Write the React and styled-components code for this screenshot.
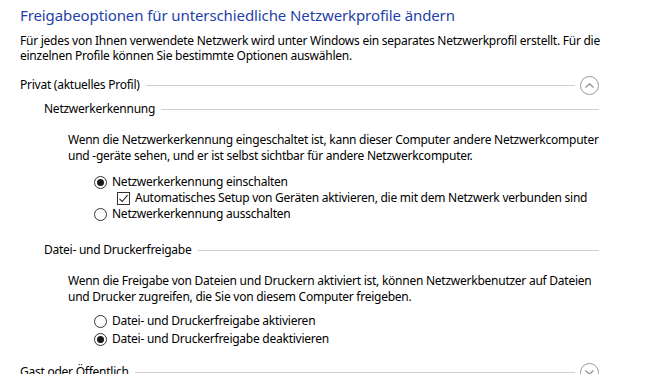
import React from 'react'
import styled, { createGlobalStyle } from 'styled-components'

const GlobalStyle = createGlobalStyle`
  html, body {
    margin: 0;
    padding: 0;
    background: #ffffff;
    overflow: hidden;
  }
  body {
    font-family: "Noto Sans", "Open Sans", sans-serif;
    font-size: 12px;
    letter-spacing: -0.25px;
    color: #000000;
  }
`

const sections = [
  {
    title: 'Netzwerkerkennung',
    text: [
      'Wenn die Netzwerkerkennung eingeschaltet ist, kann dieser Computer andere Netzwerkcomputer',
      'und -geräte sehen, und er ist selbst sichtbar für andere Netzwerkcomputer.',
    ],
    rowHeight: 16,
    options: [
      { type: 'radio', label: 'Netzwerkerkennung einschalten', checked: true },
      { type: 'check', label: 'Automatisches Setup von Geräten aktivieren, die mit dem Netzwerk verbunden sind', checked: true },
      { type: 'radio', label: 'Netzwerkerkennung ausschalten' },
    ],
  },
  {
    title: 'Datei- und Druckerfreigabe',
    text: [
      'Wenn die Freigabe von Dateien und Druckern aktiviert ist, können Netzwerkbenutzer auf Dateien',
      'und Drucker zugreifen, die Sie von diesem Computer freigeben.',
    ],
    rowHeight: 18,
    options: [
      { type: 'radio', label: 'Datei- und Druckerfreigabe aktivieren' },
      { type: 'radio', label: 'Datei- und Druckerfreigabe deaktivieren', checked: true },
    ],
  },
]

const Chevron = ({ up }) => (
  <svg width="9" height="5" viewBox="0 0 9 5">
    <path
      d={up ? 'M0.5 4.5 L4.5 0.8 L8.5 4.5' : 'M0.5 0.5 L4.5 4.2 L8.5 0.5'}
      fill="none"
      stroke="#8a8a8a"
      strokeWidth="1.1"
    />
  </svg>
)

const Option = ({ type, label, checked, height }) => (
  <OptionRow $height={height} $nested={type === 'check'}>
    {type === 'radio' ? (
      <Radio>{checked && <Dot />}</Radio>
    ) : (
      <Box>
        {checked && (
          <svg width="11" height="11" viewBox="0 0 11 11">
            <path d="M1.5 5.8 L4.2 8.5 L9.6 2.2" fill="none" stroke="#222" strokeWidth="1.1" />
          </svg>
        )}
      </Box>
    )}
    <OptionLabel>{label}</OptionLabel>
  </OptionRow>
)

export default function App() {
  return (
    <Page>
      <GlobalStyle />
      <Title>Freigabeoptionen für unterschiedliche Netzwerkprofile ändern</Title>
      <Intro>
        Für jedes von Ihnen verwendete Netzwerk wird unter Windows ein separates Netzwerkprofil erstellt. Für die
        <br />
        einzelnen Profile können Sie bestimmte Optionen auswählen.
      </Intro>

      <ProfileHeader>
        <HeaderLabel>Privat (aktuelles Profil)</HeaderLabel>
        <Rule />
        <Toggle><Chevron up /></Toggle>
      </ProfileHeader>

      {sections.map((s, i) => (
        <Section key={s.title} $first={i === 0}>
          <SubHeader>
            <HeaderLabel>{s.title}</HeaderLabel>
            <Rule />
          </SubHeader>
          <Body>
            <Text>
              {s.text[0]}
              <br />
              {s.text[1]}
            </Text>
            <Options $first={i === 0}>
              {s.options.map((o) => (
                <Option key={o.label} {...o} height={s.rowHeight} />
              ))}
            </Options>
          </Body>
        </Section>
      ))}

      <ProfileHeader $last>
        <HeaderLabel>Gast oder Öffentlich</HeaderLabel>
        <Rule />
        <Toggle><Chevron /></Toggle>
      </ProfileHeader>
    </Page>
  )
}

const Page = styled.div`
  width: 579px;
  padding: 5px 0 0 20px;
`

const Title = styled.h1`
  margin: 0;
  font-size: 15px;
  line-height: 20px;
  font-weight: 400;
  letter-spacing: -0.1px;
  color: #1f3fa8;
  white-space: nowrap;
`

const Intro = styled.p`
  margin: 8px 0 0;
  line-height: 15px;
  white-space: nowrap;
`

const ProfileHeader = styled.div`
  display: flex;
  align-items: center;
  height: 20px;
  margin-top: ${(p) => (p.$last ? '14px' : '12px')};
`

const HeaderLabel = styled.span`
  white-space: nowrap;
  line-height: 16px;
`

const Rule = styled.div`
  flex: 1;
  height: 1px;
  background: #cfcfcf;
  margin-left: 6px;
`

const Toggle = styled.div`
  width: 17px;
  height: 17px;
  margin-left: 5px;
  border: 1px solid #9a9a9a;
  border-radius: 50%;
  display: flex;
  align-items: center;
  justify-content: center;
`

const Section = styled.section`
  margin-top: ${(p) => (p.$first ? '6px' : '20px')};
  padding-left: 24px;
`

const SubHeader = styled.div`
  display: flex;
  align-items: center;
  height: 16px;
`

const Body = styled.div`
  padding-left: 24px;
`

const Text = styled.p`
  margin: 15px 0 0;
  line-height: 16px;
  white-space: nowrap;
`

const Options = styled.div`
  margin-top: ${(p) => (p.$first ? '10px' : '7px')};
  padding-left: 26px;
  display: flex;
  flex-direction: column;
`

const OptionRow = styled.div`
  display: flex;
  align-items: center;
  height: ${(p) => p.$height}px;
  padding-left: ${(p) => (p.$nested ? '23px' : '0')};
`

const Radio = styled.span`
  width: 11px;
  height: 11px;
  border: 1px solid #333;
  border-radius: 50%;
  display: flex;
  align-items: center;
  justify-content: center;
  flex-shrink: 0;
`

const Dot = styled.span`
  width: 7px;
  height: 7px;
  border-radius: 50%;
  background: #1a1a1a;
`

const Box = styled.span`
  width: 11px;
  height: 11px;
  border: 1px solid #333;
  display: flex;
  align-items: center;
  justify-content: center;
  flex-shrink: 0;
`

const OptionLabel = styled.span`
  margin-left: 5px;
  white-space: nowrap;
  line-height: 16px;
`
